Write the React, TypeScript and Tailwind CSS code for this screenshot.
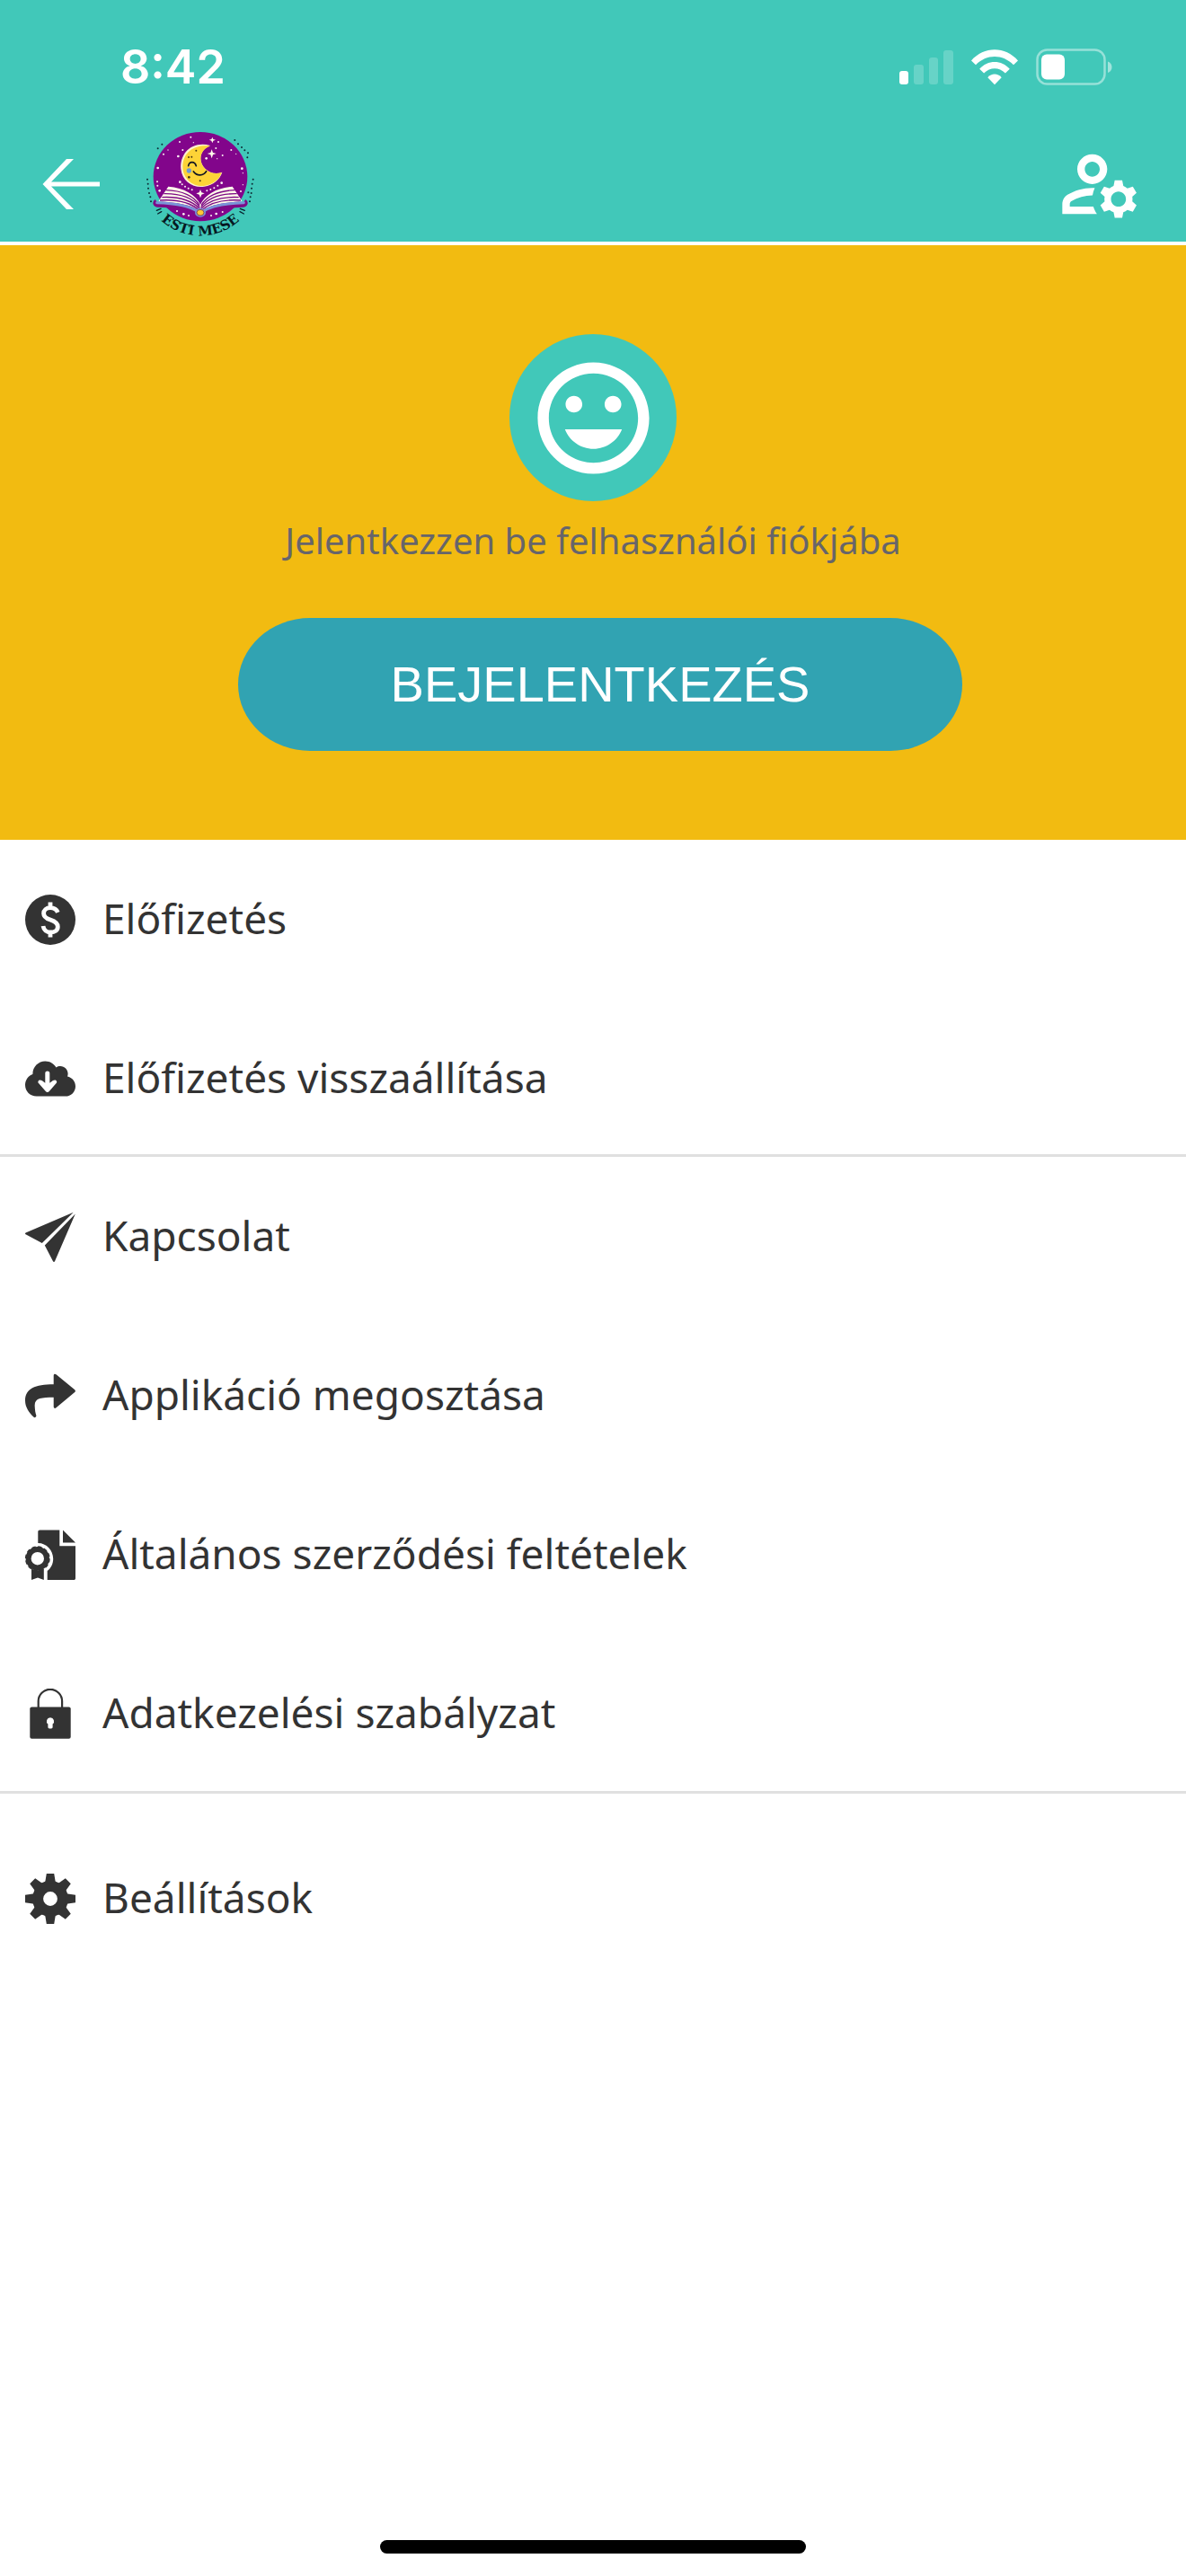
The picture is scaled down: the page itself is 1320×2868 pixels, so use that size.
import React, { ReactNode } from 'react';
import { MdInsertEmoticon, MdOutlineManageAccounts } from 'react-icons/md';

interface MenuItem {
  id: string;
  label: string;
  icon: ReactNode;
}

const GEAR_ANGLES = [0, 45, 90, 135, 180, 225, 270, 315];

function DollarIcon() {
  return (
    <svg viewBox="0 0 56 56" className="size-14" fill="none" aria-hidden="true">
      <circle cx="28" cy="28" r="28" fill="currentColor" />
      <path
        d="M36.300 19.800C35 16.500 32 14.700 28 14.700c-4.500 0-7.400 2.600-7.400 6.200 0 4 3 5.600 7.400 7.100 4.800 1.600 8.300 3.300 8.300 7.700 0 4-3.300 6.300-8 6.300-4.300 0-7.600-2.500-8.300-7M28 8.500V15M28 41.500v6"
        stroke="white"
        strokeWidth="4.800"
      />
    </svg>
  );
}

function CloudDownloadIcon() {
  return (
    <svg viewBox="0 0 56 56" className="size-14" fill="currentColor" aria-hidden="true">
      <g transform="translate(0 5.6) scale(.0875)">
        <path d="M537.6 226.6c4.100-10.700 6.400-22.400 6.400-34.600 0-53-43-96-96-96-19.700 0-38.100 6-53.300 16.200C367 64.200 315.300 32 256 32c-88.400 0-160 71.600-160 160 0 2.700.1 5.400.2 8.100C40.200 219.800 0 273.200 0 336c0 79.500 64.500 144 144 144h368c70.700 0 128-57.300 128-128 0-61.900-44-113.600-102.400-125.400z" />
      </g>
      <path
        d="M22.300 21.800c0-3.200 5-3.200 5 0v11l3.600-2.700c3-2 5.500.8 3.700 3l-7.600 8.600c-1.400 1.600-3 1.600-4.400 0L15 33.100c-1.800-2.200.7-5 3.700-3l3.600 2.700z"
        fill="white"
      />
    </svg>
  );
}

function PaperPlaneIcon() {
  return (
    <svg viewBox="0 0 56 56" className="size-14" fill="currentColor" aria-hidden="true">
      <path d="M53.700.8.600 23.600c-.8.400-.8 1.300 0 1.700L18.800 35z" />
      <path d="M55.800 2.500 21.800 37.500 31 55.300c.4.900 1.600.9 2 0z" />
    </svg>
  );
}

function ShareIcon() {
  return (
    <svg viewBox="0 0 56 56" className="size-14" fill="currentColor" aria-hidden="true">
      <path d="M31.700 5.500c0-1.800 1.500-2.300 2.800-1.200L55.200 21.300c.9.800.9 2 0 2.800L34.500 41.300c-1.300 1.100-2.800.6-2.800-1.200V29.700c-13.500.2-21.700.3-21 10 .2 4 .6 7 1.600 10 .5 2-1.600 3.300-3 1.900C4.500 47 0 40.500 0 33.500 0 20 11 15.300 31.700 15.300z" />
    </svg>
  );
}

function ContractIcon() {
  return (
    <svg viewBox="0 0 56 56" className="size-14" fill="currentColor" aria-hidden="true">
      <path d="M16.300.4h22v17.900H56v35.900c0 1.200-.7 1.800-1.800 1.800H24.700V46c4-3 6.500-8 6.500-13.500C31 23 24 15 14.300 15V2.400c0-1.300.7-2 2-2z" />
      <path d="M42 .4 56 14.600H42z" />
      <circle cx="13.800" cy="32.200" r="10.200" fill="none" stroke="currentColor" strokeWidth="6" />
      <circle
        cx="13.800"
        cy="32.200"
        r="12.800"
        fill="none"
        stroke="currentColor"
        strokeWidth="2.200"
        strokeDasharray="4.200 2.500"
      />
      <path d="M7 43.500c4 2.300 9.800 2.300 13.800 0V56L14 53.400 7 56z" />
    </svg>
  );
}

function LockIcon() {
  return (
    <svg viewBox="0 0 56 56" className="size-14" fill="currentColor" aria-hidden="true">
      <path d="M14.700 21.500V14a13.200 13.200 0 0 1 26.400 0v7.500" fill="none" stroke="currentColor" strokeWidth="2.200" />
      <rect x="5.300" y="20.600" width="45.400" height="35.200" rx="2" />
      <path
        d="M28 32.200a4.200 4.200 0 0 1 2.600 7.400V43c0 2-5.200 2-5.200 0v-3.400A4.200 4.200 0 0 1 28 32.200z"
        fill="white"
      />
    </svg>
  );
}

function GearIcon() {
  return (
    <svg viewBox="0 0 56 56" className="size-14" fill="none" aria-hidden="true">
      <circle cx="28" cy="28" r="13.900" stroke="currentColor" strokeWidth="12" />
      {GEAR_ANGLES.map((angle) => (
        <path
          key={angle}
          d="M23.800 0h8.400l1.400 8.600 2.400 3H20l2.400-3z"
          fill="currentColor"
          transform={`rotate(${angle} 28 28)`}
        />
      ))}
    </svg>
  );
}

const subscriptionItems: MenuItem[] = [
  { id: 'subscribe', label: 'Előfizetés', icon: <DollarIcon /> },
  { id: 'restore', label: 'Előfizetés visszaállítása', icon: <CloudDownloadIcon /> },
];

const infoItems: MenuItem[] = [
  { id: 'contact', label: 'Kapcsolat', icon: <PaperPlaneIcon /> },
  { id: 'share', label: 'Applikáció megosztása', icon: <ShareIcon /> },
  { id: 'terms', label: 'Általános szerződési feltételek', icon: <ContractIcon /> },
  { id: 'privacy', label: 'Adatkezelési szabályzat', icon: <LockIcon /> },
];

const settingsItems: MenuItem[] = [{ id: 'settings', label: 'Beállítások', icon: <GearIcon /> }];

// [x, y, radius]
const logoStars = [
  [150, 69, 3], [187, 53, 3], [196, 71, 2], [279, 69, 3], [271, 90, 3], [322, 96, 3],
  [338, 109, 2], [293, 114, 3], [96, 110, 3], [111, 96, 2], [160, 96, 3], [145, 117, 4],
  [77, 156, 4], [358, 158, 4], [361, 173, 2], [75, 202, 3], [76, 215, 3], [83, 232, 4],
  [361, 212, 2], [354, 234, 3], [239, 124, 4], [275, 125, 2], [151, 203, 4], [158, 211, 3],
  [168, 218, 3], [179, 224, 3], [191, 229, 3], [241, 232, 3], [253, 228, 3], [265, 223, 3],
  [277, 215, 3], [290, 206, 4], [141, 300, 3], [163, 310, 4], [180, 315, 3], [255, 315, 3],
  [272, 309, 4], [293, 303, 3],
];

const logoDots = [
  [77, 91], [91, 77], [334, 63], [345, 76], [357, 87], [367, 97], [378, 106], [376, 121],
  [42, 194], [44, 209], [45, 224], [48, 240], [52, 253], [54, 268],
  [395, 194], [392, 209], [390, 224], [389, 240], [386, 253], [384, 268], [379, 238],
];

const pageLines = [
  'M103 230C160 231 200 252 216 281',
  'M97 242C155 241 196 259 217 287',
  'M91 254C150 251 191 266 217 292',
  'M84 264C145 260 188 273 217 298',
];

function Logo() {
  return (
    <svg viewBox="30 18 384 384" className="size-32" role="img" aria-label="Esti mese">
      <ellipse cx="219" cy="185" rx="157" ry="149" fill="#82058b" />
      {logoStars.map(([x, y, r]) => (
        <circle key={`${x}-${y}`} cx={x} cy={y} r={r} fill="#fdf3f4" />
      ))}
      {logoDots.map(([x, y]) => (
        <circle key={`${x}-${y}`} cx={x} cy={y} r="3" fill="#0c2b35" />
      ))}
      <g fill="#fffbea">
        <path d="m259 53 3 7 8 2-8 3-3 8-3-8-8-3 8-2z" />
        <path d="m257 94 4 11 11 3-11 4-4 12-4-12-11-4 11-3z" />
        <path d="m219 228 4 10 10 3-10 4-4 11-4-11-10-4 10-3z" />
      </g>

      {/* Moon */}
      <path
        d="M252 81C190 65 150 108 154 159C158 202 196 224 232 218C262 213 284 195 292 170C256 184 220 156 220 125C220 104 234 88 252 81z"
        fill="#fff3d0"
      />
      <path
        d="M252 83C205 77 161 98 160 152C161 194 196 219 230 216C261 212 282 196 290 171C256 184 220 156 220 125C220 104 234 88 252 83z"
        fill="#fdd337"
      />
      <circle cx="181" cy="165" r="8" fill="#6f9bd3" />
      <g fill="none" stroke="#101623" strokeWidth="5" strokeLinecap="round">
        <path d="M179 149C182 133 200 133 205 149" />
        <path d="M196 168C207 184 230 183 239 167" />
      </g>
      <g fill="#4a3a12">
        <circle cx="180" cy="120" r="3" />
        <circle cx="190" cy="119" r="3" />
        <circle cx="205" cy="98" r="3" />
        <circle cx="181" cy="187" r="4" />
        <circle cx="218" cy="199" r="3" />
      </g>

      {/* Open book */}
      <path
        d="M73 268C67 272 69 278 76 279C140 281 178 288 203 304C208 315 230 315 235 304C260 288 300 281 362 279C369 278 371 272 365 268"
        fill="none"
        stroke="#7d0b86"
        strokeWidth="17"
        strokeLinejoin="round"
      />
      <path d="M79 268 112 218C165 222 203 245 219 278C235 245 273 222 326 218L359 268C300 272 250 278 219 302C190 278 140 272 79 268z" fill="#fffbea" />
      <g fill="none" stroke="#7d0b86" strokeWidth="4">
        {pageLines.map((d) => (
          <path key={d} d={d} />
        ))}
        <g transform="translate(438 0) scale(-1 1)">
          {pageLines.map((d) => (
            <path key={d} d={d} />
          ))}
        </g>
      </g>
      <path
        d="M74 272C140 274 180 281 208 300M364 272C300 274 258 281 230 300"
        fill="none"
        stroke="#7a93d8"
        strokeWidth="9"
        strokeLinecap="round"
      />
      <ellipse cx="219" cy="305" rx="18" ry="15" fill="#7a93d8" />
      <ellipse cx="219" cy="305" rx="12" ry="10" fill="#fdc934" stroke="#5b1752" strokeWidth="2" />

      <g stroke="#07202c" strokeWidth="4" strokeLinecap="round">
        <path d="m73 298 14-6M77 309l12-7M352 292l15 6M351 302l13 7" />
      </g>
      <path id="logo-arc" d="M24 187A195 195 0 0 0 414 187" fill="none" />
      <text
        className="font-['DejaVu_Serif',serif] text-[45px] font-bold"
        fill="#061822"
        textAnchor="middle"
      >
        <textPath href="#logo-arc" startOffset="50%">
          ESTI MESE
        </textPath>
      </text>
    </svg>
  );
}

function StatusBar() {
  return (
    <div className="flex h-[141px] items-center justify-between pt-[9px] pr-[81px] pl-[134px]">
      <span className="font-['Inter',sans-serif] text-[52px] leading-none font-semibold">8:42</span>
      <div className="flex items-center gap-5">
        <svg viewBox="0 0 60 40" className="h-10 w-[60px]" fill="white" aria-hidden="true">
          <rect x="0" y="24" width="10" height="15" rx="3" />
          <rect x="16" y="17" width="11" height="22" rx="3" opacity=".2" />
          <rect x="33" y="9" width="10" height="30" rx="3" opacity=".2" />
          <rect x="49" y="1" width="11" height="38" rx="3" opacity=".2" />
        </svg>
        <svg viewBox="0 0 52 40" className="h-10 w-[52px]" fill="white" aria-hidden="true">
          <path d="M0 12.500C14-3.800 38-3.800 52 12.500l-5 4.800C35 4.900 17 4.900 5 17.300z" />
          <path d="M9.200 21.800c9-10.400 24.600-10.400 33.600 0L37.900 26.600c-7-7-16.800-7-23.800 0z" />
          <path d="M18.300 31.300c4.200-5 11.200-5 15.400 0L26 39.200z" />
        </svg>
        <svg viewBox="0 0 86 42" className="h-[42px] w-[86px]" aria-hidden="true">
          <rect x="1.500" y="1.500" width="75" height="38" rx="11" fill="none" stroke="white" strokeWidth="2.500" opacity=".45" />
          <rect x="6" y="6.500" width="26" height="28" rx="6" fill="white" />
          <path d="M80 14.500c6 2 6 10.500 0 12.500z" fill="white" opacity=".5" />
        </svg>
      </div>
    </div>
  );
}

function MenuSection({ items }: { items: MenuItem[] }) {
  return (
    <ul>
      {items.map((item) => (
        <li key={item.id}>
          <button type="button" className="flex h-[177px] w-full items-center gap-[30px] px-7 text-left">
            {item.icon}
            <span className="pb-1 text-[46px] leading-[60px]">{item.label}</span>
          </button>
        </li>
      ))}
    </ul>
  );
}

export default function App() {
  return (
    <div className="flex min-h-screen flex-col bg-white font-['Noto_Sans',sans-serif] text-[#333333]">
      <header className="border-b-4 border-white bg-[#41c8b9] bg-clip-padding text-white">
        <StatusBar />
        <div className="flex h-32 items-center justify-between pr-[46px] pl-[47px]">
          <div className="flex items-center gap-12">
            <button type="button" aria-label="Vissza">
              <svg viewBox="0 0 65 56" className="h-14 w-[65px]" fill="white" aria-hidden="true">
                <path d="M27 0h8L10 25.500h54v5H10L35 56h-8L.500 28z" />
              </svg>
            </button>
            <Logo />
          </div>
          <button type="button" aria-label="Fiók beállításai">
            <MdOutlineManageAccounts className="size-[100px]" />
          </button>
        </div>
      </header>

      <section className="flex flex-col items-center bg-[#f2bb11] pt-[99px] pb-[99px]">
        <div className="flex size-[186px] items-center justify-center rounded-full bg-[#41c8b9] text-white">
          <MdInsertEmoticon className="size-[149px]" aria-hidden="true" />
        </div>
        <p className="mt-3.5 text-[40px] leading-[60px] text-[#67656a]">Jelentkezzen be felhasználói fiókjába</p>
        <button
          type="button"
          className="mt-14 ml-4 h-[148px] w-[61%] rounded-[80px/74px] bg-[#31a3b2] font-['Liberation_Sans',sans-serif] text-[56px] text-white"
        >
          BEJELENTKEZÉS
        </button>
      </section>

      <nav>
        <MenuSection items={subscriptionItems} />
        <hr className="-mt-1 border-t-[3px] border-[#e0e0e0]" />
        <MenuSection items={infoItems} />
        <hr className="-mt-0.5 mb-7 border-t-[3px] border-[#e0e0e0]" />
        <MenuSection items={settingsItems} />
      </nav>

      <div className="mx-auto mt-auto mb-[25px] h-[15px] w-[474px] rounded-full bg-black" />
    </div>
  );
}
